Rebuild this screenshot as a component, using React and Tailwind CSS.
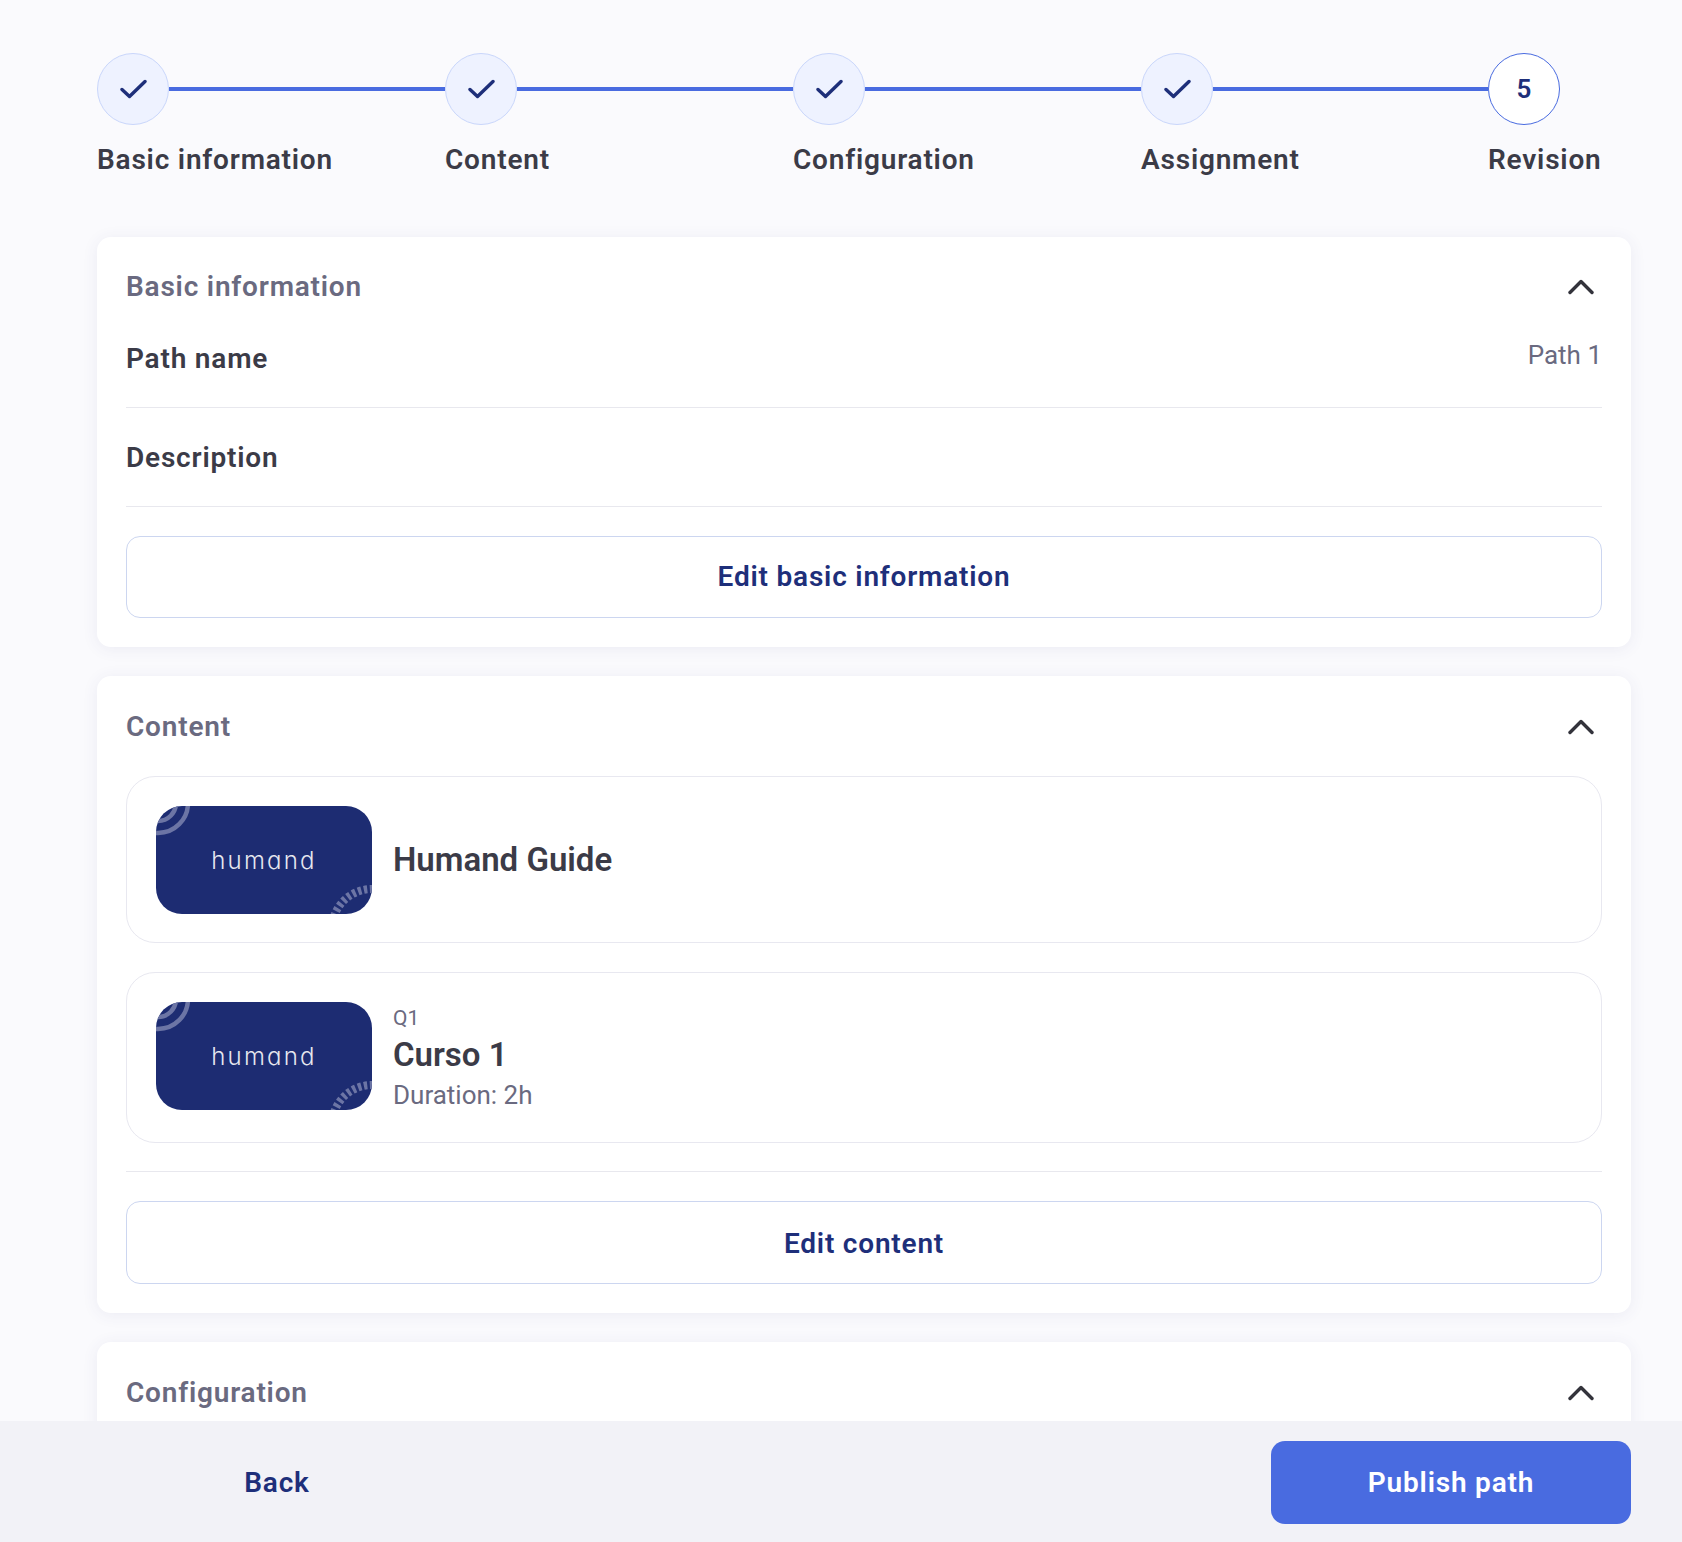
import React from "react";

const FONT = "font-['Roboto',sans-serif]";

function CheckIcon() {
  return (
    <svg width="28" height="20" viewBox="0 0 28 20" fill="none">
      <path d="M3 10.5 L10.5 17.5 L26 2.5" stroke="#1e2f7a" strokeWidth="3.4" strokeLinecap="round" strokeLinejoin="round" />
    </svg>
  );
}

function Chevron() {
  return (
    <svg width="26" height="16" viewBox="0 0 26 16" fill="none">
      <path d="M2 13.5 L13 2.5 L24 13.5" stroke="#33333b" strokeWidth="3.4" strokeLinecap="round" strokeLinejoin="round" />
    </svg>
  );
}

function Step({ label, n, width }) {
  return (
    <div className={`${width} shrink-0`}>
      <div className="flex items-center">
        {n ? (
          <div className="w-[72px] h-[72px] shrink-0 rounded-full bg-white border border-[#496be0] flex items-center justify-center text-[26px] font-semibold text-[#1e2f7a]">
            {n}
          </div>
        ) : (
          <div className="w-[72px] h-[72px] shrink-0 rounded-full bg-[#eef2ff] border border-[#c9d6fb] flex items-center justify-center">
            <CheckIcon />
          </div>
        )}
        {!n && <div className="flex-1 h-1 bg-[#496be0]" />}
      </div>
      <div className="mt-[15px] text-[28px] leading-[40px] font-semibold tracking-[0.8px] text-[#3b3b47] whitespace-nowrap">{label}</div>
    </div>
  );
}

function CardHeader({ title }) {
  return (
    <div className="flex items-center justify-between h-[40px]">
      <span className="text-[28px] leading-[40px] font-semibold tracking-[0.8px] text-[#6a6a80]">{title}</span>
      <span className="mr-[8px] flex"><Chevron /></span>
    </div>
  );
}

function OutlineButton({ children, tall }) {
  return (
    <button className={`w-full ${tall ? "h-[83px] pt-[2px]" : "h-[82px]"} rounded-[14px] border border-[#ccd6f0] bg-white text-[28px] font-semibold tracking-[0.8px] text-[#1e2f7a]`}>
      {children}
    </button>
  );
}

function Thumb() {
  return (
    <div className="relative w-[216px] h-[108px] shrink-0 rounded-[26px] overflow-hidden bg-[#1d2c72] flex items-center justify-center">
      <svg className="absolute left-0 top-0" width="40" height="32" viewBox="0 0 40 32" fill="none">
        <circle cx="2" cy="-3" r="18" stroke="#6c75a5" strokeWidth="4.5" />
        <circle cx="2" cy="-3" r="30" stroke="#6c75a5" strokeWidth="4.5" />
      </svg>
      <svg className="absolute right-0 bottom-0" width="44" height="30" viewBox="0 0 44 30" fill="none">
        <circle cx="44" cy="45" r="40" stroke="#6c75a5" strokeWidth="8" strokeDasharray="3.4 2.6" />
      </svg>
      <span className="relative font-['Inter',sans-serif] font-light [font-feature-settings:'cv11'] text-[24px] leading-none tracking-[2.2px] text-[#e6e7ef] mt-[2px]">humand</span>
    </div>
  );
}

export default function App() {
  return (
    <div className={`${FONT} h-[1542px] flex flex-col overflow-hidden bg-[#fafafd]`}>
      <div className="flex-1 min-h-0 overflow-hidden pl-[97px] pr-[51px] pt-[53px]">
        <div className="flex">
          <Step label="Basic information" width="w-[348px]" />
          <Step label="Content" width="w-[348px]" />
          <Step label="Configuration" width="w-[348px]" />
          <Step label="Assignment" width="w-[347px]" />
          <Step label="Revision" n={5} width="w-[114px]" />
        </div>

        <section className="mt-[57px] rounded-[14px] bg-white shadow-[0_2px_16px_rgba(70,70,130,0.08)] px-[29px] pt-[30px] pb-[29px]">
          <CardHeader title="Basic information" />
          <div className="mt-[20px] h-[81px] border-b border-[#e8e8ee] flex justify-between">
            <span className="text-[28px] leading-[40px] font-semibold tracking-[0.8px] text-[#3b3b47] mt-[12px]">Path name</span>
            <span className="text-[26px] leading-[40px] text-[#6a6a80] mt-[8px]">Path 1</span>
          </div>
          <div className="h-[99px] border-b border-[#e8e8ee] pt-[30px]">
            <span className="text-[28px] leading-[40px] font-semibold tracking-[0.8px] text-[#3b3b47]">Description</span>
          </div>
          <div className="mt-[29px]"><OutlineButton>Edit basic information</OutlineButton></div>
        </section>

        <section className="mt-[29px] rounded-[14px] bg-white shadow-[0_2px_16px_rgba(70,70,130,0.08)] px-[29px] pt-[31px] pb-[29px]">
          <CardHeader title="Content" />
          <div className="mt-[29px] h-[167px] rounded-[29px] border border-[#e8e8f0] px-[29px] flex items-center gap-[21px]">
            <Thumb />
            <span className="text-[33px] leading-[44px] font-semibold text-[#3b3b47]">Humand Guide</span>
          </div>
          <div className="mt-[29px] h-[171px] rounded-[29px] border border-[#e8e8f0] px-[29px] pt-[29px] flex items-start gap-[21px]">
            <Thumb />
            <div className="flex flex-col mt-[1px]">
              <span className="text-[21px] leading-[30px] text-[#6a6a80]">Q1</span>
              <span className="text-[33px] leading-[44px] font-semibold text-[#3b3b47]">Curso 1</span>
              <span className="text-[26px] leading-[36px] text-[#6a6a80]">Duration: 2h</span>
            </div>
          </div>
          <div className="mt-[28px] border-t border-[#e8e8ee] pt-[29px]"><OutlineButton tall>Edit content</OutlineButton></div>
        </section>

        <section className="mt-[29px] rounded-[14px] bg-white shadow-[0_2px_16px_rgba(70,70,130,0.08)] px-[29px] pt-[31px] pb-[100px]">
          <CardHeader title="Configuration" />
        </section>
      </div>

      <footer className="h-[121px] shrink-0 bg-[#f2f2f7] pl-[97px] pr-[51px] flex items-start justify-between pt-[20px]">
        <button className="w-[360px] h-[83px] text-[28px] font-semibold tracking-[0.8px] text-[#1e2f7a]">Back</button>
        <button className="w-[360px] h-[83px] rounded-[14px] bg-[#496be0] text-[28px] font-semibold tracking-[0.8px] text-white">Publish path</button>
      </footer>
    </div>
  );
}
